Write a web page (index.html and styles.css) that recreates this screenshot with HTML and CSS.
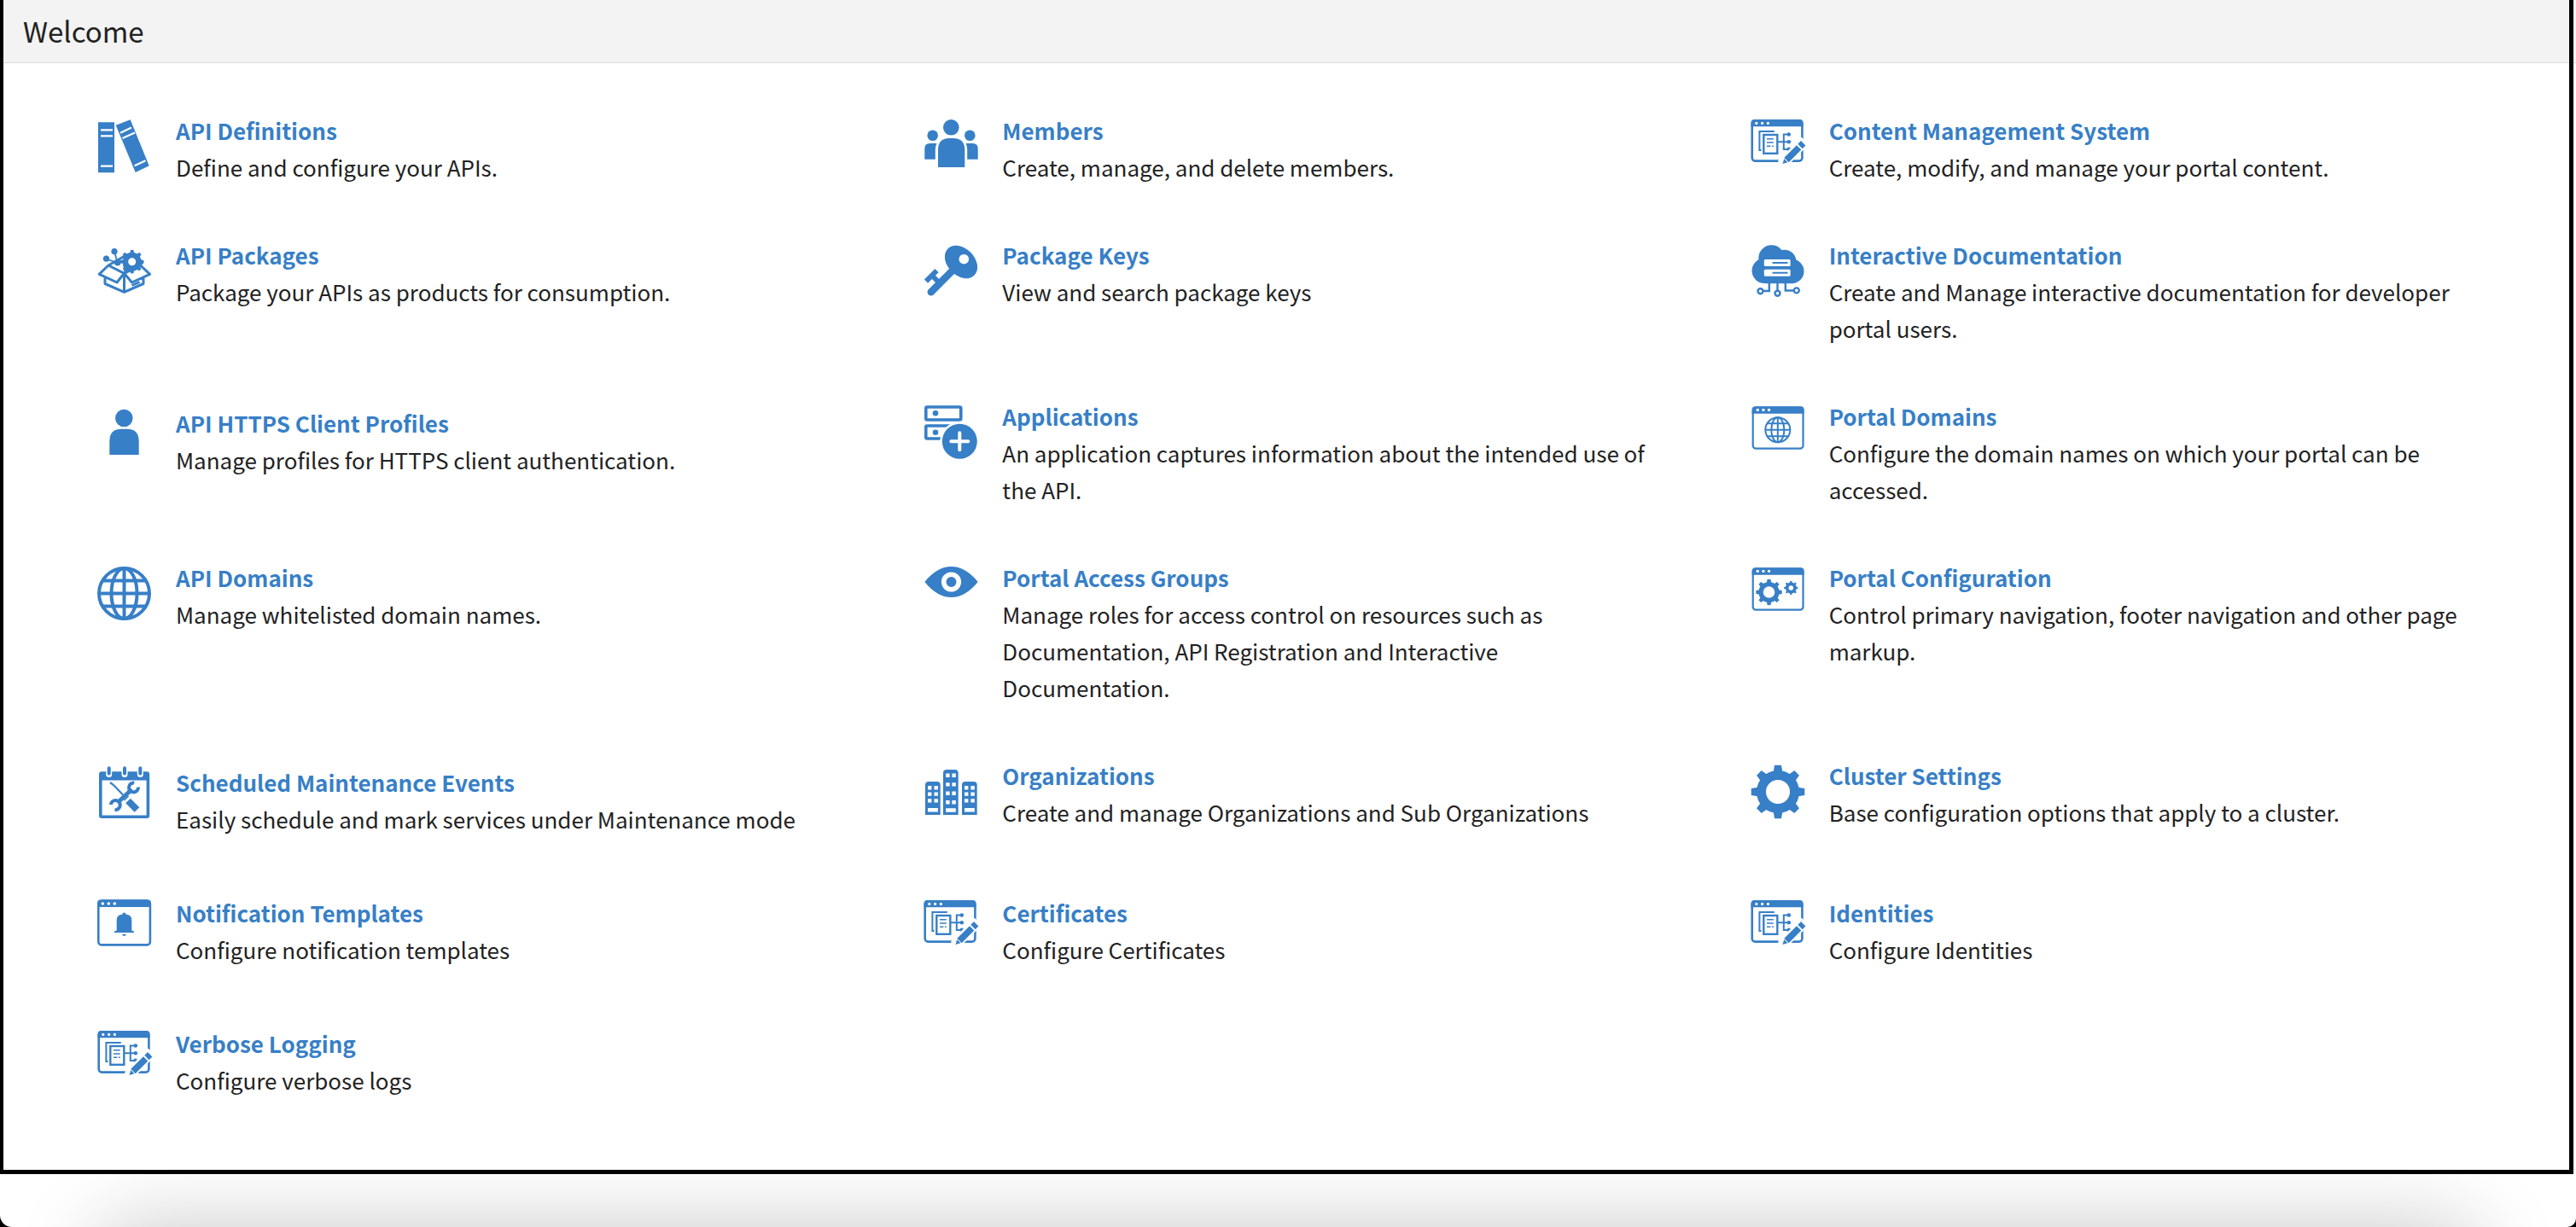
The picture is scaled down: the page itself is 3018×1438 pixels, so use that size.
FILE: index.html
```html
<!DOCTYPE html>
<html lang="en">
<head>
<meta charset="utf-8">
<title>Welcome</title>
<meta name="viewport" content="width=device-width, initial-scale=1">
<link rel="stylesheet" href="styles.css">
</head>
<body>
<svg class="sprite" aria-hidden="true">
  <symbol id="gear" viewBox="-32 -32 64 64">
    <circle r="19.5" fill="none" stroke="currentColor" stroke-width="11"/>
    <g id="gear-teeth" fill="currentColor">
      <path id="tooth" d="M-5.5-22L-4-31.3H4L5.5-22Z"/>
      <use href="#tooth" transform="rotate(45)"/><use href="#tooth" transform="rotate(90)"/><use href="#tooth" transform="rotate(135)"/><use href="#tooth" transform="rotate(180)"/><use href="#tooth" transform="rotate(225)"/><use href="#tooth" transform="rotate(270)"/><use href="#tooth" transform="rotate(315)"/>
    </g>
  </symbol>
  <symbol id="window" viewBox="0 0 64 64">
    <rect x="1.7" y="2.5" width="58.8" height="48.2" rx="3.5" fill="none" stroke="currentColor" stroke-width="2.2"/>
    <path d="M.6 9.7V5.3a4 4 0 0 1 4-4H57.6a4 4 0 0 1 4 4V9.7Z" fill="currentColor"/>
    <g fill="#fff"><circle cx="7.2" cy="5.4" r="1.7"/><circle cx="13.9" cy="5.4" r="1.7"/><circle cx="20.5" cy="5.4" r="1.7"/></g>
  </symbol>
  <symbol id="content" viewBox="-1 -1 66 66">
    <rect x=".7" y="1.3" width="58.7" height="47.3" rx="3.5" fill="none" stroke="currentColor" stroke-width="2.6"/>
    <path d="M-.5 8.2V4a4 4 0 0 1 4-4H56.5a4 4 0 0 1 4 4V8.2Z" fill="currentColor"/>
    <g fill="#fff"><circle cx="5.8" cy="4.4" r="1.6"/><circle cx="12.6" cy="4.4" r="1.6"/><circle cx="19.4" cy="4.4" r="1.6"/></g>
    <g fill="none" stroke="currentColor" stroke-width="2">
      <path d="M11.5 36H9.4V14H26.8"/>
      <rect x="14.3" y="18" width="16" height="21.8" stroke-width="2.4"/>
      <path d="M18 22.8H25.8M18 27H25.8M18 31.3H22.4M24 31.3H25.8" stroke-width="1.6"/>
      <path d="M31 26.3H44M44 17.5H37.8V35H44"/>
    </g>
    <g fill="currentColor"><circle cx="43.8" cy="17.5" r="2.3"/><circle cx="43.8" cy="26.3" r="2.3"/><circle cx="43.8" cy="34.8" r="2.3"/></g>
    <path d="M35 53L63 25" stroke="#fff" stroke-width="12"/>
    <path d="M41 47.5L55.6 32.9M57 31.5L60.7 27.8" stroke="currentColor" stroke-width="7.6"/>
    <path d="M36.5 51.9L38.2 46L42.4 50.2Z" fill="currentColor"/>
  </symbol>
  <symbol id="globe" viewBox="-32 -32 64 64">
    <g fill="none" stroke="currentColor" stroke-width="4">
      <circle r="29.5"/><ellipse rx="15" ry="29.5"/><path d="M0-29V29M-29 0H29M-25-15H25M-25 15H25"/>
    </g>
  </symbol>
</svg>

<div class="page">
  <header class="page__header"><h1 class="page__title">Welcome</h1></header>
  <main class="tiles">

    <section class="tile">
      <svg class="tile__icon" viewBox="0 0 64 64" aria-hidden="true"><path d="M0 3.3H19V62.3H0ZM20.7 6.7L37.7.3L59.7 54.3L43.7 62Z" fill="currentColor"/><path d="M3 12.3H17M3 19.3H17M3 54.7H17M26 15.7L39 9.5M28.5 21.9L43 15.5M42.6 54.3L55.5 48.3" stroke="#fff" stroke-width="2.2"/></svg>
      <div class="tile__text"><h2 class="tile__title"><a href="#">API Definitions</a></h2><p>Define and configure your APIs.</p></div>
    </section>

    <section class="tile">
      <svg class="tile__icon" viewBox="0 0 64 64" aria-hidden="true" fill="currentColor"><circle cx="31.3" cy="9.3" r="9.3"/><path d="M16 56V36Q16 22 29 22H34Q47.3 22 47.3 36V56Z"/><circle cx="9.7" cy="18.7" r="6.3"/><circle cx="53.3" cy="18.7" r="6.3"/><path d="M.3 46.7V34Q.3 28 6.5 28H14.5Q12.8 31 12.8 35V46.7ZM62.7 46.7V34Q62.7 28 56.5 28H48.5Q50.2 31 50.2 35V46.7Z"/></svg>
      <div class="tile__text"><h2 class="tile__title"><a href="#">Members</a></h2><p>Create, manage, and delete members.</p></div>
    </section>

    <section class="tile">
      <svg class="tile__icon" aria-hidden="true"><use href="#content" x="-1" y="-1" width="66" height="66"/></svg>
      <div class="tile__text"><h2 class="tile__title"><a href="#">Content Management System</a></h2><p>Create, modify, and manage your portal content.</p></div>
    </section>

    <section class="tile">
      <svg class="tile__icon" viewBox="0 0 64 64" aria-hidden="true"><g fill="none" stroke="currentColor" stroke-width="3" stroke-linejoin="round"><path d="M12 25L1.2 35.3L22 45L30.5 34.3ZM49.5 25L60.6 35.3L39.5 45L30.5 34.3ZM12 25L33 13M49.5 25L52.5 20M8 40V46.5L30.5 56.3L53 46.5V40M30.5 34V56M39.5 48.5L48.5 44.5"/><path d="M19 9L22.5 21M9.5 17.5L22.5 22" stroke-width="1.8"/></g><g fill="currentColor"><circle cx="19" cy="8.7" r="3.6"/><circle cx="9.5" cy="17.2" r="3.6"/><circle cx="22.7" cy="21.7" r="3.8"/><path d="M29 24L31 34.5L48 27L42 22Z"/></g><circle cx="39.7" cy="20.7" r="6" fill="#fff"/><use href="#gear" x="25.7" y="6.7" width="28" height="28"/><circle cx="39.7" cy="20.7" r="6" fill="none" stroke="currentColor" stroke-width="3"/></svg>
      <div class="tile__text"><h2 class="tile__title"><a href="#">API Packages</a></h2><p>Package your APIs as products for consumption.</p></div>
    </section>

    <section class="tile">
      <svg class="tile__icon" viewBox="0 0 64 64" aria-hidden="true"><ellipse cx="43" cy="21" rx="22" ry="15.8" transform="rotate(45 43 21)" fill="currentColor"/><path d="M33 31L7.8 56.2" stroke="currentColor" stroke-width="8.5" stroke-linecap="round"/><path d="M2 43.6L14.5 31.1M9 37L17 45" stroke="currentColor" stroke-width="6"/><circle cx="46.3" cy="17.7" r="5.8" fill="#fff"/></svg>
      <div class="tile__text"><h2 class="tile__title"><a href="#">Package Keys</a></h2><p>View and search package keys</p></div>
    </section>

    <section class="tile">
      <svg class="tile__icon" viewBox="0 0 64 64" aria-hidden="true"><g fill="currentColor"><circle cx="23.5" cy="16.5" r="15.2"/><circle cx="38.5" cy="20.7" r="14"/><circle cx="15.2" cy="31.3" r="14.7"/><circle cx="47.3" cy="32" r="14.2"/><path d="M15 20H47V46.2H15Z"/></g><rect x="14.8" y="18" width="30.8" height="8" rx="1.5" fill="#fff"/><rect x="14.8" y="29.8" width="30.8" height="8" rx="1.5" fill="#fff"/><path d="M24.5 22H42.5M24.5 33.8H42.5" stroke="currentColor" stroke-width="2"/><g fill="none" stroke="currentColor" stroke-width="2.4"><path d="M20.8 46V55H14M30.5 46V54.5M39.8 46V54.5H49.5"/><circle cx="10.5" cy="55.3" r="3"/><circle cx="30.5" cy="57.8" r="3"/><circle cx="52.8" cy="54.4" r="3"/></g></svg>
      <div class="tile__text"><h2 class="tile__title"><a href="#">Interactive Documentation</a></h2><p>Create and Manage interactive documentation for developer portal users.</p></div>
    </section>

    <section class="tile tile--low">
      <svg class="tile__icon" viewBox="0 0 64 64" aria-hidden="true" fill="currentColor"><circle cx="30.3" cy="15" r="10.3"/><path d="M13.3 58V42Q13.3 27.7 27 27.7H34Q47.7 27.7 47.7 42V58Z"/></svg>
      <div class="tile__text"><h2 class="tile__title"><a href="#">API HTTPS Client Profiles</a></h2><p>Manage profiles for HTTPS client authentication.</p></div>
    </section>

    <section class="tile">
      <svg class="tile__icon" viewBox="0 0 64 64" aria-hidden="true"><g fill="none" stroke="currentColor" stroke-width="3.6"><rect x="1.8" y="2" width="41" height="15" rx="1.5"/><rect x="1.8" y="24" width="41" height="15" rx="1.5"/></g><circle cx="41.3" cy="42.3" r="23" fill="#fff"/><g fill="currentColor"><circle cx="13" cy="9.3" r="3.3"/><circle cx="13" cy="31.7" r="3.3"/><circle cx="41.3" cy="42.3" r="20.5"/></g><path d="M41.3 32.3V52.3M31.3 42.3H51.3" stroke="#fff" stroke-width="4" stroke-linecap="round"/></svg>
      <div class="tile__text"><h2 class="tile__title"><a href="#">Applications</a></h2><p>An application captures information about the intended use of the API.</p></div>
    </section>

    <section class="tile">
      <svg class="tile__icon" viewBox="0 0 64 64" aria-hidden="true"><use href="#window" width="64" height="64"/><g fill="none" stroke="currentColor" stroke-width="2"><circle cx="30.8" cy="28.8" r="14.5"/><ellipse cx="30.8" cy="28.8" rx="7.5" ry="14.5"/><path d="M30.8 14.5V43M16.5 28.8H45M18.5 21.3H43M18.5 36.3H43"/></g></svg>
      <div class="tile__text"><h2 class="tile__title"><a href="#">Portal Domains</a></h2><p>Configure the domain names on which your portal can be accessed.</p></div>
    </section>

    <section class="tile">
      <svg class="tile__icon" viewBox="0 0 64 64" aria-hidden="true"><use href="#globe" x="-1.5" y="-.5" width="64" height="64"/></svg>
      <div class="tile__text"><h2 class="tile__title"><a href="#">API Domains</a></h2><p>Manage whitelisted domain names.</p></div>
    </section>

    <section class="tile">
      <svg class="tile__icon" viewBox="0 0 64 64" aria-hidden="true"><path d="M.3 18Q15 .1 31.5 .1T62.7 18Q48 36 31.5 36T.3 18Z" fill="currentColor"/><circle cx="31.5" cy="18" r="8.8" fill="none" stroke="#fff" stroke-width="5.6"/></svg>
      <div class="tile__text"><h2 class="tile__title"><a href="#">Portal Access Groups</a></h2><p>Manage roles for access control on resources such as Documentation, API Registration and Interactive Documentation.</p></div>
    </section>

    <section class="tile">
      <svg class="tile__icon" viewBox="0 0 64 64" aria-hidden="true"><use href="#window" width="64" height="64"/><use href="#gear" x="5" y="14.5" width="31" height="31"/><use href="#gear" x="38" y="16.7" width="16.6" height="16.6"/><circle cx="46.3" cy="25" r="4" fill="none" stroke="currentColor" stroke-width="2.4"/></svg>
      <div class="tile__text"><h2 class="tile__title"><a href="#">Portal Configuration</a></h2><p>Control primary navigation, footer navigation and other page markup.</p></div>
    </section>

    <section class="tile tile--low tile--roomy">
      <svg class="tile__icon" viewBox="0 0 64 64" aria-hidden="true"><rect x="2.8" y="10" width="55.6" height="51.2" rx="1.5" fill="none" stroke="currentColor" stroke-width="3.6"/><path d="M2 9H59V18.5H2Z" fill="currentColor"/><path d="M12.7 6V11.5M31 6V11.5M49.3 6V11.5" stroke="#fff" stroke-width="7" stroke-linecap="round"/><path d="M12.7 4.3V10.5M31 4.3V10.5M49.3 4.3V10.5" stroke="currentColor" stroke-width="4" stroke-linecap="round"/><g fill="none" stroke="currentColor"><path d="M14 21L18 24L29 35.5" stroke-width="2.2"/><path d="M35 42.5L45.5 53" stroke-width="8"/><path d="M30.5 42L35.5 37" stroke-width="1.6"/><path d="M23 44.5L39.5 29" stroke-width="5"/><path d="M42.3 21.5A5.5 5.5 0 1 0 47 26.5M14.8 47A5.5 5.5 0 1 1 19.5 53" stroke-width="4"/></g></svg>
      <div class="tile__text"><h2 class="tile__title"><a href="#">Scheduled Maintenance Events</a></h2><p>Easily schedule and mark services under Maintenance mode</p></div>
    </section>

    <section class="tile">
      <svg class="tile__icon" viewBox="0 0 64 64" aria-hidden="true"><path d="M1 59V24Q1 20 5 20H14.7Q18.7 20 18.7 24V59ZM22 59V10Q22 6 26 6H35.7Q39.7 6 39.7 10V59ZM44 59V24Q44 20 48 20H57.7Q61.7 20 61.7 24V59Z" fill="currentColor"/><path d="M4 27.3H8.4M11.5 27.3H15.9M4 34.6H8.4M11.5 34.6H15.9M4 42.4H8.4M11.5 42.4H15.9M4 53.3H15.9M25.2 12.8H29.6M32.4 12.8H36.8M25.2 23.4H29.6M32.4 23.4H36.8M25.2 33.7H29.6M32.4 33.7H36.8M25.2 44.3H29.6M32.4 44.3H36.8M25.2 53.5H36.8M47 27.3H51.4M54.4 27.3H58.8M47 34.6H51.4M54.4 34.6H58.8M47 42.4H51.4M54.4 42.4H58.8M47 53.3H58.8" stroke="#fff" stroke-width="4.4"/></svg>
      <div class="tile__text"><h2 class="tile__title"><a href="#">Organizations</a></h2><p>Create and manage Organizations and Sub Organizations</p></div>
    </section>

    <section class="tile">
      <svg class="tile__icon" viewBox="0 0 64 64" aria-hidden="true"><use href="#gear" x="-1" y="0" width="64" height="64"/></svg>
      <div class="tile__text"><h2 class="tile__title"><a href="#">Cluster Settings</a></h2><p>Base configuration options that apply to a cluster.</p></div>
    </section>

    <section class="tile tile--roomy tile--compact">
      <svg class="tile__icon" viewBox="0 0 64 64" aria-hidden="true"><rect x=".3" y=".6" width="60.6" height="51.8" rx="4" fill="none" stroke="currentColor" stroke-width="2.6"/><path d="M-1 8V3.5a4 4 0 0 1 4-4H58a4 4 0 0 1 4 4V8Z" fill="currentColor"/><g fill="#fff"><circle cx="5.3" cy="4" r="1.8"/><circle cx="12.3" cy="4" r="1.8"/><circle cx="19.3" cy="4" r="1.8"/></g><path d="M21.7 35.5V23Q21.7 17.5 28.5 16.6A2 2 0 0 1 32.5 16.6Q39.3 17.5 39.3 23V35.5L42 36.5V38H19V36.5ZM27.7 40H33.3Q30.5 44 27.7 40Z" fill="currentColor"/></svg>
      <div class="tile__text"><h2 class="tile__title"><a href="#">Notification Templates</a></h2><p>Configure notification templates</p></div>
    </section>

    <section class="tile tile--compact">
      <svg class="tile__icon" aria-hidden="true"><use href="#content" x="-1" y="-1" width="66" height="66"/></svg>
      <div class="tile__text"><h2 class="tile__title"><a href="#">Certificates</a></h2><p>Configure Certificates</p></div>
    </section>

    <section class="tile tile--compact">
      <svg class="tile__icon" aria-hidden="true"><use href="#content" x="-1" y="-1" width="66" height="66"/></svg>
      <div class="tile__text"><h2 class="tile__title"><a href="#">Identities</a></h2><p>Configure Identities</p></div>
    </section>

    <section class="tile tile--compact">
      <svg class="tile__icon" aria-hidden="true"><use href="#content" x="-1" y="-1" width="66" height="66"/></svg>
      <div class="tile__text"><h2 class="tile__title"><a href="#">Verbose Logging</a></h2><p>Configure verbose logs</p></div>
    </section>

  </main>
</div>
<div class="shade"></div>
</body>
</html>
```
FILE: styles.css
```css
*,
*::before,
*::after {
  box-sizing: border-box;
}

html {
  background: #000;
}

body {
  display: flex;
  flex-direction: column;
  min-height: 100vh;
  margin: 0;
  overflow: hidden;
  border-radius: 0 0 10px 14px;
  background: #fff;
  color: #222;
  font-family: "Noto Sans CJK SC", "Open Sans", sans-serif;
  font-size: 26px;
  line-height: 43px;
}

.sprite {
  position: absolute;
  width: 0;
  height: 0;
}

.page {
  position: relative;
}

/* Heavy outline laid over the page, open at the top */
.page::after {
  content: "";
  position: absolute;
  inset: 0 3px 0 0;
  border: solid #000;
  border-width: 0 5px 5px 4px;
  pointer-events: none;
}

.page__header {
  padding: 15px 27px;
  border-bottom: 1px solid #dcdcdc;
  background: #f3f3f3;
}

.page__title {
  margin: 0;
  font-size: 33px;
  font-weight: 400;
  line-height: 43px;
}

.tiles {
  display: grid;
  grid-template-columns: repeat(3, 1fr);
  gap: 60px 110px;
  padding: 57px 108px 89px 115px;
}

.tile {
  display: flex;
  align-items: flex-start;
  gap: 27px;
}

.tile__icon {
  flex: none;
  width: 64px;
  height: 64px;
  margin-top: 9px;
  overflow: visible;
  color: #377fc7;
}

.tile__text {
  flex: 1;
  min-width: 0;
}

.tile__text p {
  margin: 0;
}

.tile__title {
  margin: 0;
  font-size: 26px;
  font-weight: 700;
}

.tile__title a {
  color: #377fc7;
  text-decoration: none;
}

.tile--low .tile__text {
  padding-top: 8px;
}

.tile--roomy {
  padding-bottom: 7px;
}

.tile--compact .tile__icon {
  margin-top: 7px;
}

/* Soft shadow rising from the bottom edge of the window */
.shade {
  position: relative;
  flex: 1;
  min-height: 62px;
  overflow: hidden;
}

.shade::after {
  content: "";
  position: absolute;
  top: 100%;
  right: 120px;
  left: 120px;
  height: 200px;
  box-shadow: 0 0 100px rgba(0, 0, 0, 0.22);
}
```
